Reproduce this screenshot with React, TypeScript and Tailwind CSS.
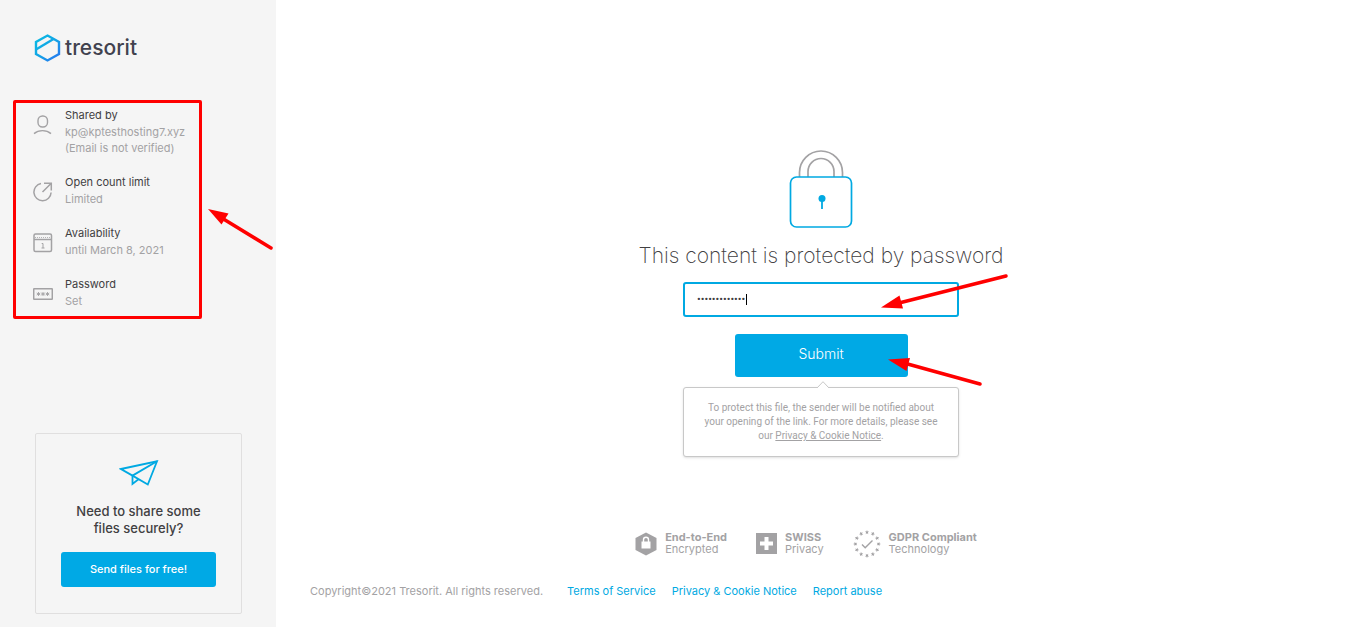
import type { ReactNode } from "react";

type Detail = {
  title: string;
  lines: string[];
  icon: ReactNode;
};

const details: Detail[] = [
  {
    title: "Shared by",
    lines: ["kp@kptesthosting7.xyz", "(Email is not verified)"],
    icon: (
      <svg className="w-5 h-5" viewBox="0 0 20 20" fill="none" stroke="currentColor" strokeWidth="1.4">
        <rect x="5" y="1" width="9.5" height="11" rx="4.5" />
        <path d="M1 18.6C3.5 16.4 6.5 15.6 9.5 15.6s6 .8 8.5 3" />
      </svg>
    ),
  },
  {
    title: "Open count limit",
    lines: ["Limited"],
    icon: (
      <svg className="w-5 h-5" viewBox="0 0 20 20" fill="none" stroke="currentColor" strokeWidth="1.5">
        <path d="M8 1.6A8.6 8.6 0 1 0 18.1 10.5" />
        <path d="M9.5 10 18 1.5M11 1.2h7.3v7.3" />
      </svg>
    ),
  },
  {
    title: "Availability",
    lines: ["until March 8, 2021"],
    icon: (
      <svg className="w-5 h-5" viewBox="0 0 20 20" fill="none" stroke="currentColor" strokeWidth="1.5">
        <rect x="1" y="1" width="17.5" height="17.5" rx="1.5" />
        <path d="M1 6.5h18" />
        <path d="M2 4.5h16" strokeWidth="0.8" strokeDasharray="1 1" />
        <path d="M8.7 10.5H10v4.5M8.5 15h3" strokeWidth="1" />
      </svg>
    ),
  },
  {
    title: "Password",
    lines: ["Set"],
    icon: (
      <svg className="w-5 h-5" viewBox="0 0 20 20" fill="none" stroke="currentColor" strokeWidth="1.5">
        <rect x="0.7" y="4.7" width="18.6" height="10.6" rx="0.5" />
        <path
          d="M5.5 8v4M3.700 9l3.600 2M7.300 9l-3.600 2M10 8v4M8.200 9l3.600 2M11.800 9l-3.600 2M14.500 8v4M12.700 9l3.600 2M16.300 9l-3.600 2"
          strokeWidth="0.9"
        />
      </svg>
    ),
  },
];

const stars = Array.from({ length: 12 }, (_, i) => i * 30);

const badges = [
  {
    title: "End-to-End",
    text: "Encrypted",
    icon: (
      <svg className="w-[22px] h-7" viewBox="0 0 22 28">
        <path d="M11 2.5 21.5 8v12L11 25.5.5 20V8z" fill="#a3a2a4" />
        <path d="M6.5 11.5h9v7h-9z" fill="#fff" />
        <path d="M8.5 12v-2.2a2.5 2.5 0 0 1 5 0V12" fill="none" stroke="#fff" strokeWidth="1.4" />
      </svg>
    ),
  },
  {
    title: "SWISS",
    text: "Privacy",
    icon: (
      <svg className="w-[21px] h-7" viewBox="0 0 21 28">
        <path d="M0 3h21v21H0z" fill="#a3a2a4" />
        <path d="M8.5 7h4v4.500H17v4h-4.500V20h-4v-4.500H4v-4h4.500z" fill="#fff" />
      </svg>
    ),
  },
  {
    title: "GDPR Compliant",
    text: "Technology",
    icon: (
      <svg className="w-7 h-7" viewBox="0 0 28 28">
        {stars.map((angle) => (
          <path
            key={angle}
            d="M14 0l.6 1.5 1.5.1-1.2 1 .4 1.600-1.300-.9-1.300.9.4-1.600-1.200-1 1.500-.1z"
            fill="#a3a2a4"
            transform={`rotate(${angle} 14 14)`}
          />
        ))}
        <path d="M9 14.5l3.2 3.2 7.3-7.2" fill="none" stroke="#a3a2a4" strokeWidth="1.4" />
      </svg>
    ),
  },
];

function Logo() {
  return (
    <a href="#" className="flex items-center gap-1 text-[#41424f]">
      <svg className="w-[27px] h-7" viewBox="0 0 27 28" fill="none" stroke="url(#logo)" strokeWidth="2.4">
        <defs>
          <linearGradient id="logo" x1="0" y1="0" x2="27" y2="28" gradientUnits="userSpaceOnUse">
            <stop offset="0" stopColor="#06c0e2" />
            <stop offset="0.5" stopColor="#13a4e6" />
            <stop offset="1" stopColor="#2d6bf2" />
          </linearGradient>
        </defs>
        <path d="M13.5 1.5 25 7.9v12.2l-11.5 6.4L2 20.1V7.9z" />
        <path d="M2 15.5 19.5 5" />
      </svg>
      <span className="text-[21px] leading-7 font-medium">tresorit</span>
    </a>
  );
}

function Sidebar() {
  return (
    <aside className="w-[276px] shrink-0 bg-[#f5f5f5] flex flex-col pt-[34px] pb-[13px]">
      <div className="pl-[34px]">
        <Logo />
      </div>

      <div className="relative mt-[38px] ml-[13px] w-[189px] h-[219px] border-3 border-[#ff0000] rounded-xs pt-1 pl-[17px]">
        <ul className="flex flex-col gap-[18px]">
          {details.map((item) => (
            <li key={item.title} className="flex gap-3 text-[#a3a2a4]">
              <span className="pt-2">{item.icon}</span>
              <div className="text-[11px] leading-4 whitespace-nowrap">
                <p className="leading-[17px] text-[#414042]">{item.title}</p>
                {item.lines.map((line) => (
                  <p key={line}>{line}</p>
                ))}
              </div>
            </li>
          ))}
        </ul>
        <svg className="absolute left-[191px] top-[105px] w-[68px] h-[44px]" viewBox="0 0 68 44">
          <path d="M14 9.5 64 40" stroke="#ff0000" strokeWidth="3.5" strokeLinecap="round" />
          <path d="M1 1l20.500 4.500L14.500 16.500z" fill="#ff0000" />
        </svg>
      </div>

      <section className="mt-auto mr-[34px] ml-[35px] h-[181px] border border-[#e0dfdf] rounded-xs flex flex-col items-center pt-[26px]">
        <svg className="w-10 h-[26px]" viewBox="0 0 40 26" fill="none" stroke="#00a9e2" strokeWidth="1.8">
          <path d="M2 9 38 1.3 28.8 24.5 13.5 15.6z" />
          <path d="M38 1.3 13.5 15.6V24l6-4.8" />
        </svg>
        <h2 className="mt-[17px] text-[13px] leading-[17px] font-medium text-center text-[#414042]">
          Need to share some
          <br />
          files securely?
        </h2>
        <button type="button" className="mt-[15px] w-[155px] h-[35px] rounded-[3px] bg-[#00a9e5] text-[11px] font-medium text-white">
          Send files for free!
        </button>
      </section>
    </aside>
  );
}

function PasswordForm() {
  return (
    <form className="relative w-[276px] flex flex-col items-center" onSubmit={(e) => e.preventDefault()}>
      <svg className="w-16 h-[78px]" viewBox="0 0 64 78" fill="none">
        <path d="M10.5 27V22.500a21.500 21.500 0 0 1 43 0V27M19 27v-5.500a13 13 0 0 1 26 0V27" stroke="#a3a2a4" strokeWidth="1.7" />
        <rect x="1.5" y="27" width="61" height="50" rx="6" stroke="#00a9e2" strokeWidth="1.7" />
        <circle cx="33" cy="48.5" r="3.5" fill="#00a9e2" />
        <path d="M33 50v9" stroke="#00a9e2" strokeWidth="1.8" />
      </svg>
      <label htmlFor="password" className="mt-4 text-[21px] leading-6 font-extralight whitespace-nowrap text-[#414042]">
        This content is protected by password
      </label>
      <div className="relative mt-[14px] w-full">
        <input
          id="password"
          type="password"
          defaultValue="tresoritlinks"
          className="block w-full h-[35px] border-2 border-[#00a9e2] rounded-[3px] bg-white px-3 font-['Roboto'] text-[11px] text-[#414042] outline-none"
        />
        {/* caret after the last dot */}
        <span className="absolute left-[63px] top-3 w-px h-[11px] bg-black" />
      </div>
      <button type="submit" className="mt-[17px] w-[173px] h-[43px] rounded-[3px] bg-[#00a9e5] pb-1 text-sm font-light text-white">
        Submit
      </button>
      <div className="relative mt-2.5 w-full h-[70px] rounded-[3px] border border-[#c8c8c8] bg-white shadow-sm px-3 pt-[13px]">
        <svg className="absolute left-[133px] -top-[7px] w-3 h-2" viewBox="0 0 12 8">
          <path d="M0 8V7L6 .7 12 7v1z" fill="#fff" />
          <path d="M0 7 6 .7 12 7" fill="none" stroke="#c8c8c8" />
        </svg>
        <p className="font-['Roboto'] text-[10px] leading-[14px] text-center whitespace-nowrap text-[#a3a2a4]">
          To protect this file, the sender will be notified about
          <br />
          your opening of the link. For more details, please see
          <br />
          our{" "}
          <a href="#" className="underline">
            Privacy &amp; Cookie Notice
          </a>
          .
        </p>
      </div>

      <svg className="absolute left-[198px] top-[122px] w-[130px] h-[40px]" viewBox="0 0 130 40">
        <path d="M14 32 125 4" stroke="#ff0000" strokeWidth="3.5" strokeLinecap="round" />
        <path d="M0 35.5 18.500 23.500 22 36.500z" fill="#ff0000" />
      </svg>
      <svg className="absolute left-[205px] top-[205px] w-[96px] h-[34px]" viewBox="0 0 96 34">
        <path d="M16 8 92 29" stroke="#ff0000" strokeWidth="3.5" strokeLinecap="round" />
        <path d="M0 4.5 22 3 18.500 16z" fill="#ff0000" />
      </svg>
    </form>
  );
}

export default function App() {
  return (
    <div className="min-h-screen flex bg-white font-['Inter',sans-serif]">
      <Sidebar />
      <main className="flex-1 flex flex-col justify-end pb-[27px]">
        <div className="flex justify-center pl-0.5">
          <PasswordForm />
        </div>

        <ul className="mt-[73px] flex justify-center gap-[29px] pr-7">
          {badges.map((badge) => (
            <li key={badge.title} className="flex items-center gap-2 text-[11px] leading-3 text-[#a3a2a4]">
              {badge.icon}
              <div className="pb-0.5">
                <p className="font-bold">{badge.title}</p>
                <p>{badge.text}</p>
              </div>
            </li>
          ))}
        </ul>

        <footer className="mt-6 pl-[34px] flex gap-6 text-[11px] leading-[18px] text-[#a3a2a4]">
          <p>Copyright©2021 Tresorit. All rights reserved.</p>
          <nav className="flex gap-4 text-[#00a9e2]">
            <a href="#">Terms of Service</a>
            <a href="#">Privacy &amp; Cookie Notice</a>
            <a href="#">Report abuse</a>
          </nav>
        </footer>
      </main>
    </div>
  );
}
